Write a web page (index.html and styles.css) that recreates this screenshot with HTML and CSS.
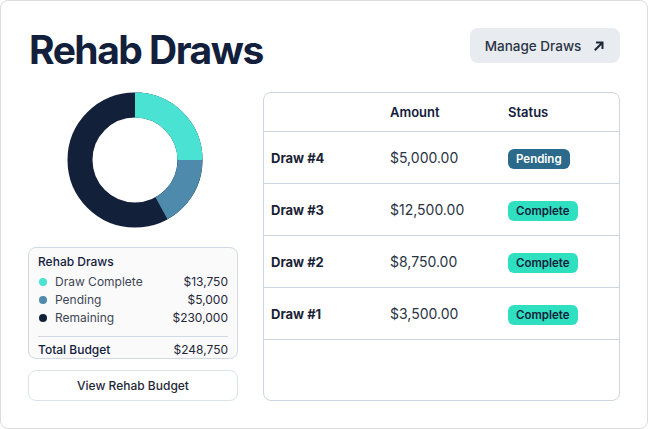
FILE: index.html
```html
<!DOCTYPE html>
<html>
<head>
<meta charset="utf-8">
<link rel="stylesheet" href="styles.css">
</head>
<body>
<div class="card">
  <div class="header">
    <h1 class="title">Rehab Draws</h1>
    <button class="manage">Manage Draws
      <svg class="arrow" width="12" height="12" viewBox="0 0 12 12"><path d="M2.5 9.5 L9 3 M4 2.5 H9.5 V8" fill="none" stroke="#1f2838" stroke-width="2" stroke-linecap="square"/></svg>
    </button>
  </div>
  <div class="main">
    <div class="left">
      <div class="donut-wrap">
        <svg class="donut" width="136" height="136" viewBox="0 0 136 136">
          <g transform="rotate(-90 68 68)">
            <circle cx="68" cy="68" r="55" fill="none" stroke="#12203a" stroke-width="25"/>
            <circle cx="68" cy="68" r="55" fill="none" stroke="#4e8aab" stroke-width="25" pathLength="100" stroke-dasharray="42 100"/>
            <circle cx="68" cy="68" r="55" fill="none" stroke="#4ae3d3" stroke-width="25" pathLength="100" stroke-dasharray="25 100"/>
          </g>
        </svg>
      </div>
      <div class="legend">
        <div class="legend-title">Rehab Draws</div>
        <div class="legend-row"><span class="dot dot-complete"></span><span class="lbl">Draw Complete</span><span class="val">$13,750</span></div>
        <div class="legend-row"><span class="dot dot-pending"></span><span class="lbl">Pending</span><span class="val">$5,000</span></div>
        <div class="legend-row"><span class="dot dot-remaining"></span><span class="lbl">Remaining</span><span class="val">$230,000</span></div>
        <div class="legend-total"><span class="lbl">Total Budget</span><span class="val">$248,750</span></div>
      </div>
      <button class="view">View Rehab Budget</button>
    </div>
    <div class="table">
      <div class="row head">
        <div class="c1"></div><div class="c2">Amount</div><div class="c3">Status</div>
      </div>
      <div class="row">
        <div class="c1 name">Draw #4</div><div class="c2 amt">$5,000.00</div><div class="c3"><span class="badge pending">Pending</span></div>
      </div>
      <div class="row">
        <div class="c1 name">Draw #3</div><div class="c2 amt">$12,500.00</div><div class="c3"><span class="badge complete">Complete</span></div>
      </div>
      <div class="row">
        <div class="c1 name">Draw #2</div><div class="c2 amt">$8,750.00</div><div class="c3"><span class="badge complete">Complete</span></div>
      </div>
      <div class="row">
        <div class="c1 name">Draw #1</div><div class="c2 amt">$3,500.00</div><div class="c3"><span class="badge complete">Complete</span></div>
      </div>
    </div>
  </div>
</div>
</body>
</html>
```
FILE: styles.css
```css
html, body { margin: 0; padding: 0; background: #fff; }
body { font-family: Inter, "Noto Sans", sans-serif; color: #13203b; }
.card {
  width: 648px; height: 429px; box-sizing: border-box;
  border: 1px solid #dcdcdc; border-radius: 8px;
  padding: 27px 27px 0 27px;
}
.header { display: flex; justify-content: space-between; align-items: flex-start; height: 64px; }
.title { margin: 0; font-size: 39px; font-weight: 700; letter-spacing: -1.5px; line-height: 40px; padding-top: 2px; padding-left: 1px; color: #13203b; }
.manage {
  display: flex; align-items: center; gap: 12px;
  height: 35px; width: 150px; justify-content: center;
  background: #e8ebf0; border: none; border-radius: 8px;
  font-family: inherit; font-size: 13.5px; font-weight: 500; color: #2b3444;
  margin-right: 0;
}
.main { display: flex; gap: 25px; }
.left { width: 210px; display: flex; flex-direction: column; }
.donut-wrap { display: flex; justify-content: center; height: 136px; padding-left: 4px; }
.legend {
  margin-top: 19px; border: 1px solid #d3d9e2; border-radius: 8px; background: #fafafb;
  padding: 6px 9px 0 9px; height: 112px; box-sizing: border-box;
}
.legend-title { font-size: 12px; font-weight: 500; color: #13203b; line-height: 16px; margin-bottom: 3px; }
.legend-row { display: flex; align-items: center; font-size: 12px; line-height: 18px; color: #3e4656; }
.dot { width: 8px; height: 8px; border-radius: 50%; margin: 0 8px 0 1px; }
.dot-complete { background: #4ae3d3; }
.dot-pending { background: #4e8aab; }
.dot-remaining { background: #12203a; }
.lbl { flex: 1; }
.val { color: #1f2838; }
.legend-total {
  display: flex; margin-top: 9px; padding-top: 5px; border-top: 1px solid #d3d9e2;
  font-size: 12px; line-height: 16px; font-weight: 500; color: #13203b;
}
.legend-total .val { font-weight: 400; }
.view {
  margin-top: 11px; height: 31px; width: 210px; box-sizing: border-box;
  border: 1px solid #dde2ea; border-radius: 8px; background: #fff;
  font-family: inherit; font-size: 12px; font-weight: 500; color: #1f2838;
}
.table {
  width: 357px; height: 309px; box-sizing: border-box;
  border: 1px solid #cfd5de; border-radius: 8px;
}
.row { display: flex; align-items: center; height: 52px; border-bottom: 1px solid #cfd5de; box-sizing: border-box; }
.row.head { height: 39px; font-size: 13px; font-weight: 600; color: #13203b; }
.c1 { width: 126px; padding-left: 7px; box-sizing: border-box; }
.c2 { width: 118px; }
.c3 { flex: 1; }
.name { font-size: 13px; font-weight: 700; color: #1a2336; }
.amt { font-size: 14px; color: #2b3444; }
.badge {
  display: inline-block; height: 20px; line-height: 20px; padding: 0 8px;
  border-radius: 6px; font-size: 11.5px; font-weight: 600;
}
.badge.pending { background: #2b6a8a; color: #fff; }
.badge.complete { background: #2ee0c0; color: #13203b; }
```
